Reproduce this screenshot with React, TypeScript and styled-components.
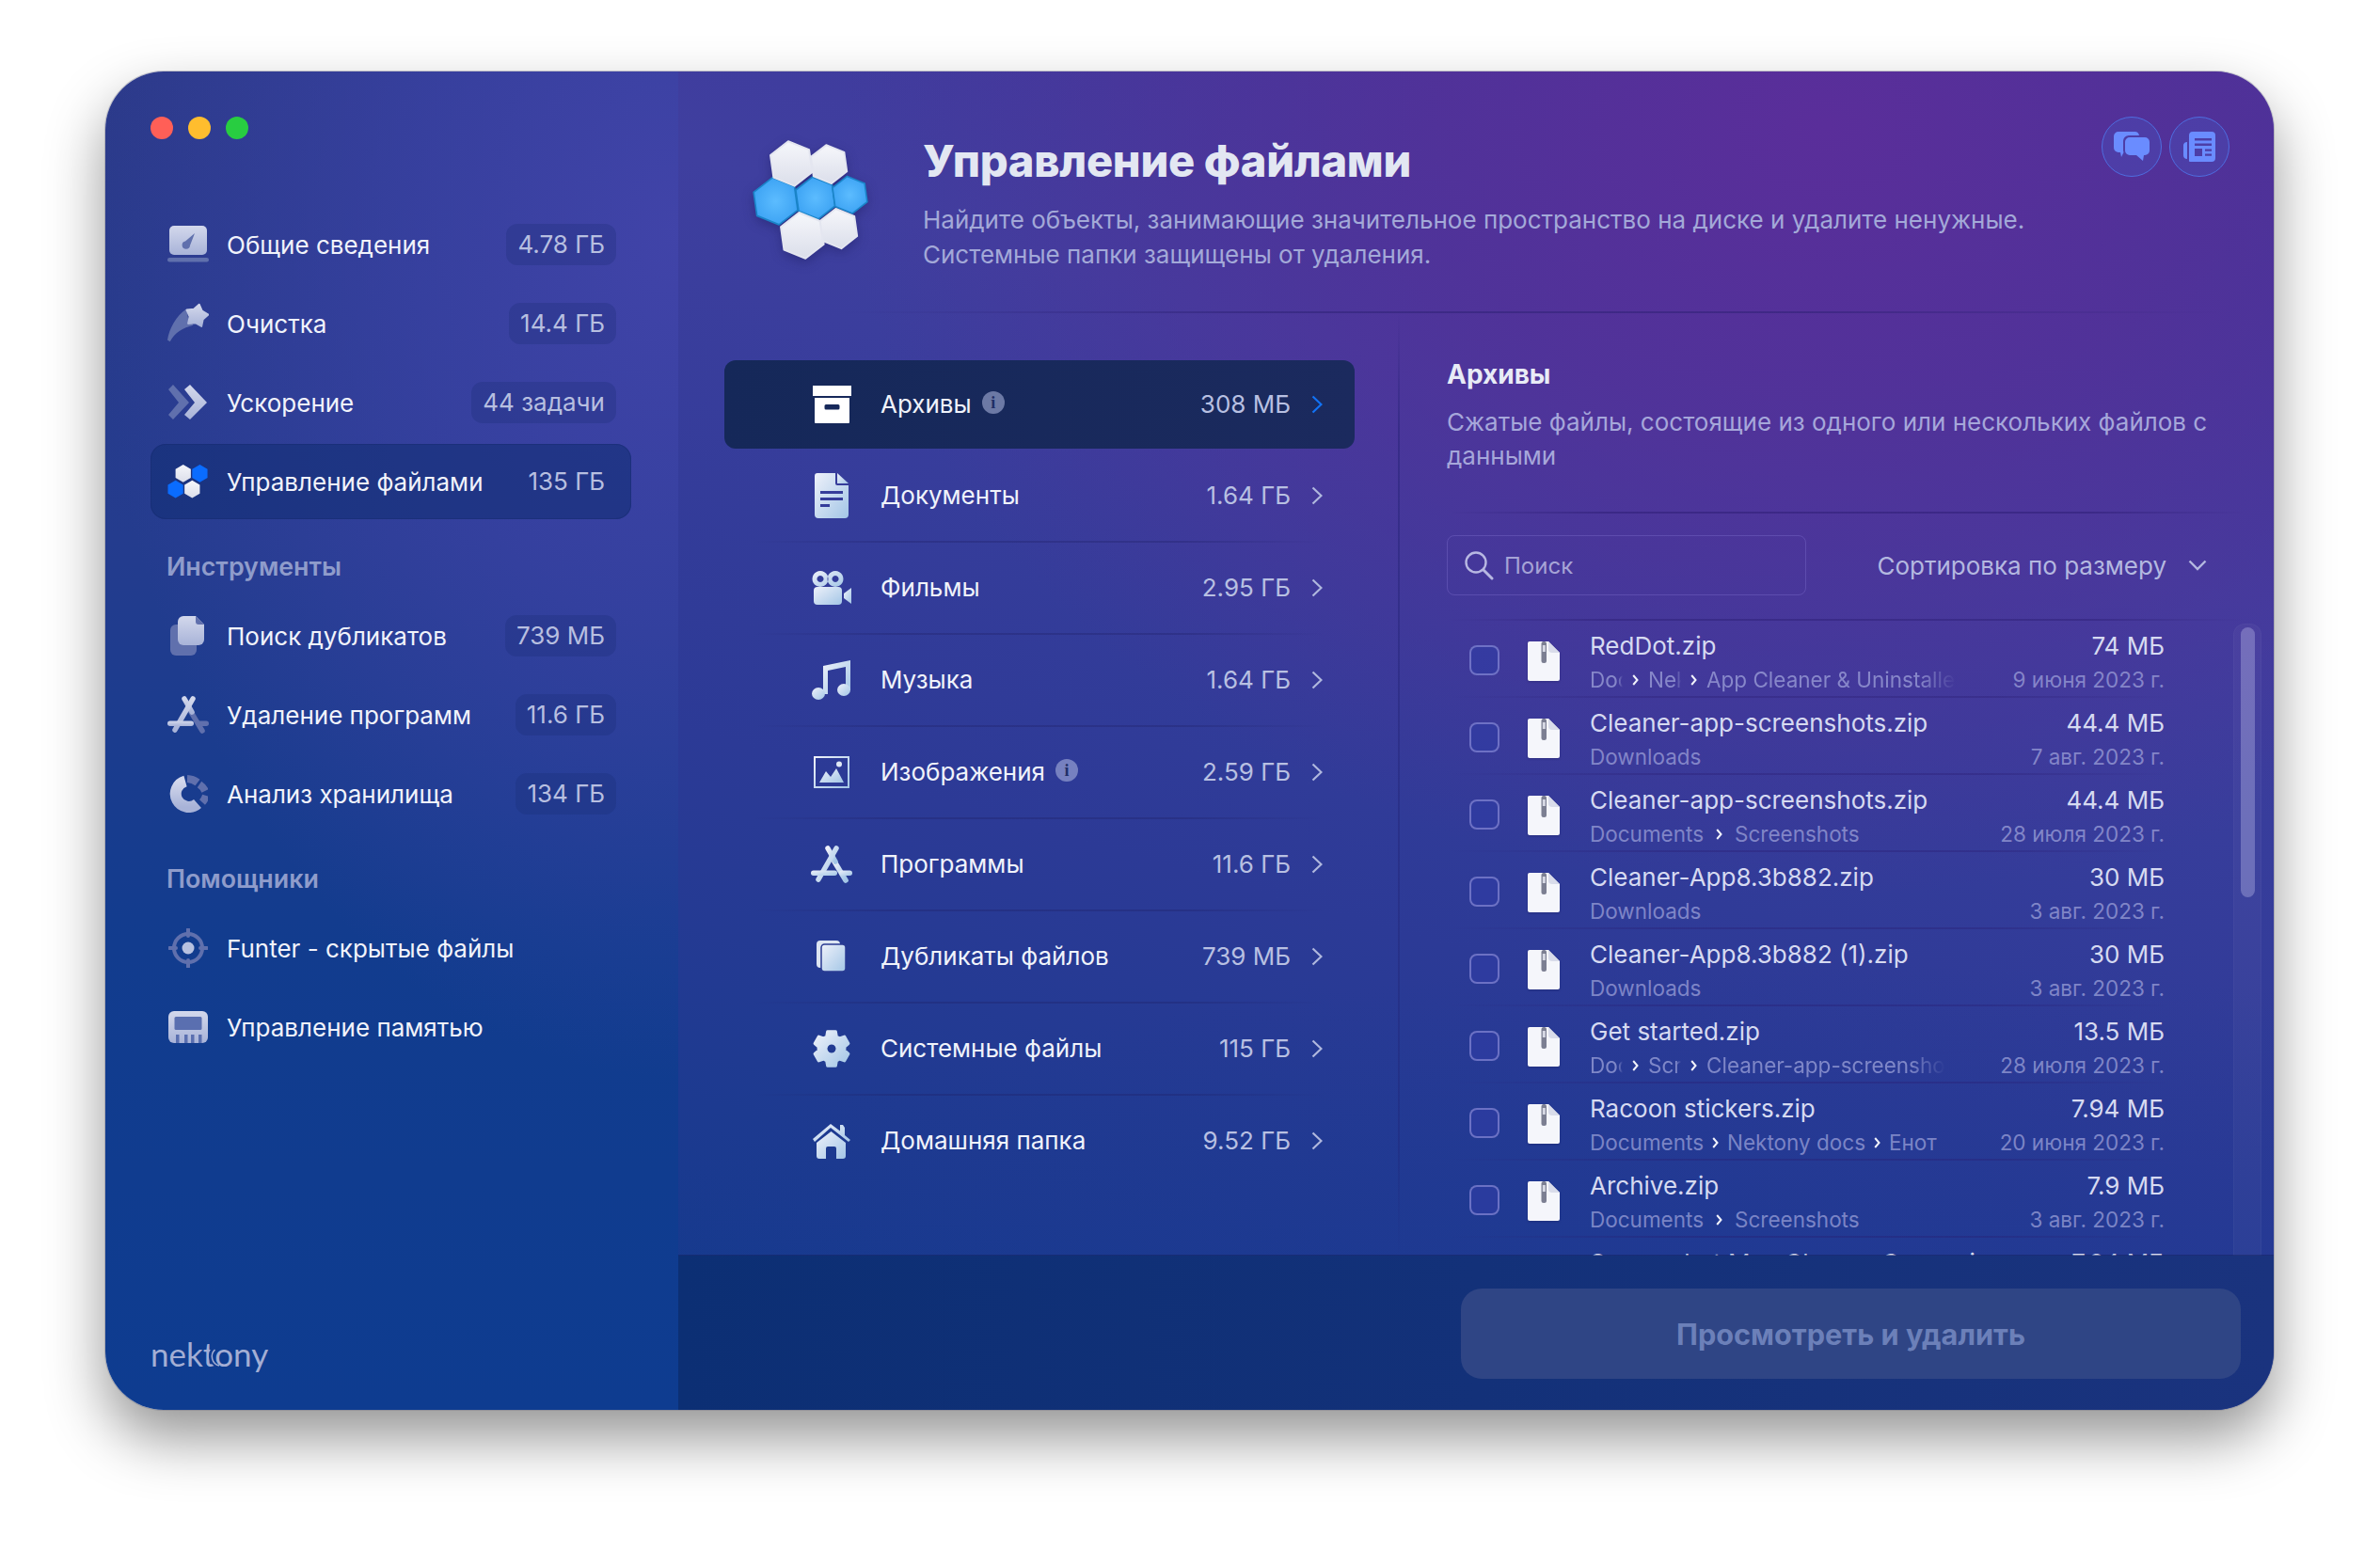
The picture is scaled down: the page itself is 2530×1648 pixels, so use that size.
import React from "react";
import styled, { createGlobalStyle } from "styled-components";

const Global = createGlobalStyle`
  html, body { margin: 0; padding: 0; background: #fff; }
  body { font-family: Inter, "Noto Sans", "Liberation Sans", sans-serif; -webkit-font-smoothing: antialiased; }
`;

const Page = styled.div`
  width: 2530px; height: 1648px; box-sizing: border-box; padding: 76px 0 0 112px; overflow: hidden; background: #fff;
`;
const Window = styled.div`
  width: 2305px; height: 1423px; display: flex; overflow: hidden; border-radius: 62px;
  box-shadow: 0 0 0 1px rgba(110,110,130,.35), 0 30px 62px rgba(0,0,0,.42);
`;
const Sidebar = styled.aside`
  width: 609px; flex: none; box-sizing: border-box; display: flex; flex-direction: column; padding: 48px 50px 38px 48px;
  background:
    radial-gradient(ellipse 620px 900px at 100% 12%, rgba(66,68,170,.95) 0%, rgba(60,66,166,.7) 45%, rgba(40,64,156,0) 100%),
    linear-gradient(to bottom, #2c3a8a 0%, #243c8e 35%, #123c8e 65%, #0e3c90 100%);
`;
const Lights = styled.div`display: flex; gap: 16px; margin-bottom: 72px;`;
const Light = styled.span<{ $c: string }>`width: 24px; height: 24px; border-radius: 50%; background: ${p => p.$c};`;
const NavRow = styled.div<{ $active?: boolean }>`
  height: 80px; margin-bottom: 4px; box-sizing: border-box; display: flex; align-items: center; padding: 0 16px 0 18px; border-radius: 16px; gap: 19px;
  background: ${p => (p.$active ? "rgba(20,46,118,.62)" : "transparent")};
  box-shadow: ${p => (p.$active ? "inset 0 0 0 1px rgba(22,42,110,.45)" : "none")};
`;
const NavIcon = styled.span`width: 44px; height: 44px; flex: none; display: flex; align-items: center; justify-content: center;`;
const NavLabel = styled.span`flex: 1; font-size: 26px; color: #f1f3fb; white-space: nowrap;`;
const Pill = styled.span<{ $plain?: boolean }>`
  height: 44px; line-height: 44px; padding: 0 12px; border-radius: 12px; font-size: 26px; color: #b7bfe0; white-space: nowrap;
  background: ${p => (p.$plain ? "transparent" : "rgba(24,42,112,.26)")};
`;
const SectionTitle = styled.div`
  margin: 30px 0 18px; padding-left: 17px; height: 32px; line-height: 32px; font-size: 26.8px; font-weight: 600; color: #8f9ccb;
`;
const LogoBox = styled.div`
  margin-top: auto; position: relative; align-self: flex-start; font-family: Lato, "Open Sans", sans-serif; font-size: 35px; line-height: 44px; color: #a3aed4;
`;
const LogoSwoosh = styled.svg`position: absolute; left: 60px; top: 10px;`;

const Main = styled.main`
  flex: 1; min-width: 0; display: flex; flex-direction: column;
  background:
    radial-gradient(ellipse 1050px 820px at 72% 4%, rgba(90,46,154,1) 0%, rgba(84,48,152,.8) 40%, rgba(70,52,150,0) 100%),
    radial-gradient(ellipse 1500px 480px at 70% 100%, rgba(28,56,146,.6) 0%, rgba(28,56,146,0) 100%),
    linear-gradient(196deg, #40349a 0%, #3f3f9f 30%, #2c3a96 62%, #103a8b 100%);
`;
const Header = styled.header`
  height: 255px; flex: none; box-sizing: border-box; display: flex; padding: 48px 47px 0 72px;
`;
const HexLogo = styled.svg`margin-top: 19px; flex: none; overflow: visible; filter: drop-shadow(0 4px 6px rgba(20,20,80,.35));`;
const HeadText = styled.div`margin: 19px 0 0 55px;`;
const Title = styled.h1`margin: 0; font-size: 47px; line-height: 56px; font-weight: 800; color: #e3e7f2; letter-spacing: -.3px;`;
const Subtitle = styled.p`margin: 16px 0 0; font-size: 26px; line-height: 37px; color: #a3a9d8; white-space: nowrap;`;
const RoundGroup = styled.div`margin-left: auto; display: flex; gap: 8px; align-self: flex-start;`;
const RoundBtn = styled.span`
  width: 64px; height: 64px; box-sizing: border-box; border-radius: 50%; display: flex; align-items: center; justify-content: center;
  background: rgba(72,84,190,.38); border: 1.5px solid #4f6ee0;
`;
const HRule = styled.div`
  height: 2px; flex: none; margin: 0 50px 0 170px;
  background: linear-gradient(to right, rgba(40,30,110,0), rgba(40,30,110,.45) 30%, rgba(40,30,110,.45) 70%, rgba(40,30,110,0));
`;
const Body = styled.div`flex: 1; min-height: 0; display: flex;`;
const Categories = styled.section`
  width: 767px; flex: none; box-sizing: border-box; padding: 50px 48px 0 49px;
  background: linear-gradient(to bottom, rgba(30,30,110,0), rgba(30,30,110,.4) 12%, rgba(30,30,110,.3) 88%, rgba(30,30,110,0)) right top / 2px 100% no-repeat;
`;
const CatRow = styled.div<{ $active?: boolean }>`
  height: ${p => (p.$active ? 94 : 96)}px; margin-bottom: ${p => (p.$active ? 2 : 0)}px; display: flex; align-items: center; padding: 0 34px 0 92px; border-radius: 12px;
  background: ${p => (p.$active ? "linear-gradient(to right,#152859,#1b2a5e)" : "transparent")};
`;
const CatSep = styled.div`
  height: 2px; margin: 0 30px;
  background: linear-gradient(to right, rgba(30,30,100,0), rgba(30,30,100,.32) 25%, rgba(30,30,100,.32) 75%, rgba(30,30,100,0));
`;
const CatIcon = styled.span`width: 44px; height: 50px; flex: none; display: flex; align-items: center; justify-content: center; margin-right: 30px;`;
const CatName = styled.span`margin-bottom: 1.5px; font-size: 26px; color: #f0f3fb; white-space: nowrap;`;
const Info = styled.span`
  width: 24px; height: 24px; margin-left: 11px; margin-top: -4px; border-radius: 50%; background: rgba(178,188,226,.55); color: #1f2e66;
  font: 700 18px/24px "Liberation Serif", serif; text-align: center;
`;
const CatValue = styled.span`margin: 0 0 1.5px auto; font-size: 26px; color: #b8c0e2; white-space: nowrap;`;
const Chevron = styled.svg`margin-left: 22px; flex: none;`;

const Details = styled.section`flex: 1; min-width: 0; display: flex; flex-direction: column; padding: 49px 0 0 50px;`;
const DetailTitle = styled.h2`margin: 0; font-size: 28px; line-height: 32px; font-weight: 700; color: #e8ebf6;`;
const DetailText = styled.p`margin: 17px 40px 0 0; font-size: 26px; line-height: 36px; color: #a6a7da;`;
const DetailRule = styled.div`
  height: 2px; flex: none; margin: 41px 30px 0 0;
  background: linear-gradient(to right, rgba(40,25,110,0), rgba(40,25,110,.45) 20%, rgba(40,25,110,.45) 80%, rgba(40,25,110,0));
`;
const Toolbar = styled.div`display: flex; align-items: center; margin: 23px 71px 0 0; height: 64px; flex: none;`;
const SearchBox = styled.div`
  width: 382px; height: 64px; box-sizing: border-box; display: flex; align-items: center; gap: 11px; padding-left: 17px; border-radius: 8px;
  border: 1.5px solid rgba(120,105,200,.45); color: #a6a3d6; font-size: 24px;
`;
const SortLabel = styled.span`margin-left: auto; font-size: 26px; color: #b4b8e0; white-space: nowrap;`;
const SortChevron = styled.svg`margin-left: 23px; flex: none;`;
const ListRule = styled.div`
  height: 2px; flex: none; margin: 25px 30px 0 0;
  background: linear-gradient(to right, rgba(40,25,110,0), rgba(40,25,110,.4) 20%, rgba(40,25,110,.4) 80%, rgba(40,25,110,0));
`;
const ListArea = styled.div`flex: 1; min-height: 0; display: flex; overflow: hidden; padding-right: 13px;`;
const Rows = styled.div`flex: 1; min-width: 0;`;
const FileRow = styled.div`
  height: 82px; box-sizing: border-box; display: flex; padding: 11px 73px 0 24px;
  background: linear-gradient(to right, rgba(40,25,110,0), rgba(40,25,110,.32) 30%, rgba(40,25,110,.32) 75%, rgba(40,25,110,0)) left bottom / 92% 2px no-repeat;
`;
const Check = styled.span`
  width: 32px; height: 32px; margin-top: 15px; flex: none; box-sizing: border-box; border-radius: 8px; border: 2px solid rgba(150,150,220,.6); background: rgba(48,60,165,.65); margin-right: 30px;
`;
const FileGlyph = styled.svg`flex: none; margin: 11px 32px 0 0; filter: drop-shadow(0 1px 1px rgba(20,20,70,.3));`;
const FileInfo = styled.div`flex: 1; min-width: 0;`;
const Line = styled.div`display: flex; justify-content: space-between; align-items: center; white-space: nowrap;`;
const FileName = styled.span`font-size: 26px; line-height: 32px; color: #d6daf1;`;
const FileSize = styled.span`font-size: 26px; line-height: 32px; color: #d6daf1;`;
const PathRow = styled.span<{ $gap: number }>`display: flex; align-items: center; gap: ${p => p.$gap}px; margin-top: 5px; font-size: 22.5px; line-height: 30px; color: rgba(168,172,224,.68);`;
const Seg = styled.span<{ $w?: number }>`
  ${p => (p.$w ? `display:inline-block; width:${p.$w}px; overflow:hidden; -webkit-mask-image:linear-gradient(to right,#000 85%,transparent); mask-image:linear-gradient(to right,#000 85%,transparent);` : "")}
`;
const FileDate = styled.span`margin-top: 4px; font-size: 22.5px; line-height: 30px; color: rgba(168,172,224,.68);`;
const Track = styled.div`
  width: 30px; flex: none; margin-top: 3px; box-sizing: border-box; padding: 4px 7.5px; border-radius: 12px 12px 0 0; background: rgba(255,255,255,.035); box-shadow: inset 0 0 0 1px rgba(255,255,255,.03);
`;
const Thumb = styled.div`width: 15px; height: 287px; border-radius: 8px; background: rgba(190,190,235,.36);`;
const Footer = styled.footer`
  height: 164px; flex: none; box-sizing: border-box; display: flex; justify-content: flex-end; padding: 35px 35px 0 0;
  background: linear-gradient(to right, #0c2f74, #1a337e);
  box-shadow: 0 -1px 0 rgba(20,30,90,.5);
`;
const ActionBtn = styled.div`
  width: 829px; height: 96px; border-radius: 22px; background: #2f4585; color: #6c80b9; font-size: 30.7px; font-weight: 700; display: flex; align-items: center; justify-content: center;
`;

/* ---- drawings ---- */
const hex = (cx: number, cy: number, r: number, rot = 0) =>
  Array.from({ length: 6 }, (_, i) => {
    const a = ((60 * i - 90 + rot) * Math.PI) / 180;
    return `${(cx + r * Math.cos(a)).toFixed(1)},${(cy + r * Math.sin(a)).toFixed(1)}`;
  }).join(" ");

const star = (cx: number, cy: number, R: number, rot = 0) =>
  Array.from({ length: 10 }, (_, i) => {
    const a = ((36 * i - 90 + rot) * Math.PI) / 180;
    const r = i % 2 ? R * 0.62 : R;
    return `${(cx + r * Math.cos(a)).toFixed(1)},${(cy + r * Math.sin(a)).toFixed(1)}`;
  }).join(" ");

const gearPath = (() => {
  const pts: string[] = [];
  const c = 22;
  for (let i = 0; i < 6; i++) {
    const base = 60 * i - 90;
    const add = (deg: number, r: number) => {
      const a = ((base + deg) * Math.PI) / 180;
      pts.push(`${(c + r * Math.cos(a)).toFixed(1)} ${(c + r * Math.sin(a)).toFixed(1)}`);
    };
    add(-13, 19.5); add(13, 19.5); add(22, 14.5); add(38, 14.5);
  }
  return `M${pts.join("L")}Z M22 15.5a6.5 6.5 0 1 0 .01 0Z`;
})();

const Defs = () => (
  <svg width="0" height="0" style={{ position: "absolute" }}>
    <defs>
      <linearGradient id="lt" x1="0" y1="0" x2="1" y2="1">
        <stop offset="0" stopColor="#eef1fa" />
        <stop offset="1" stopColor="#a3c6e6" />
      </linearGradient>
      <linearGradient id="sb" x1="0" y1="0" x2="0" y2="1">
        <stop offset="0" stopColor="#d3d8ec" />
        <stop offset="1" stopColor="#a8b3d8" />
      </linearGradient>
      <linearGradient id="wh" x1="0" y1="0" x2="0" y2="1">
        <stop offset="0" stopColor="#f6f7fb" />
        <stop offset="1" stopColor="#dbdeea" />
      </linearGradient>
      <radialGradient id="bl">
        <stop offset="0" stopColor="#5cbcff" />
        <stop offset="1" stopColor="#3ea4f4" />
      </radialGradient>
    </defs>
  </svg>
);

const DIM = "#6070ad";
const IcOverview = () => (
  <svg width="44" height="40" viewBox="0 0 44 40">
    <rect x="2" y="0" width="40" height="31" rx="5" fill="url(#sb)" />
    <rect x="0" y="34" width="44" height="4.5" rx="2.2" fill={DIM} />
    <path d="M29 8 L24 21 a4.2 4.2 0 1 1-5-4.5Z" fill={DIM} />
  </svg>
);
const IcClean = () => (
  <svg width="48" height="44" viewBox="0 0 48 44">
    <path d="M0 41 C2 28 10 13 22 5 L24 16 L30 24 C18 27 8 33 3 43Z" fill={DIM} />
    <polygon points={star(34, 13, 13.5, 12)} fill="url(#sb)" stroke="url(#sb)" strokeWidth="2" strokeLinejoin="round" />
  </svg>
);
const IcSpeed = () => (
  <svg width="42" height="38" viewBox="0 0 42 38">
    <path d="M0 5 L5 0 L22 19 L5 37 L0 32 L11 19Z" fill={DIM} />
    <path d="M17 5 L23 0 L41 19 L23 37 L17 32 L28 19Z" fill="url(#sb)" />
  </svg>
);
const IcFiles = () => (
  <svg width="46" height="38" viewBox="0 0 46 38">
    <polygon points={hex(17.5, 10, 9.8)} fill="url(#wh)" />
    <polygon points={hex(36, 10, 9.8)} fill="#0a6cff" />
    <polygon points={hex(9, 27.5, 9.8)} fill="#0a6cff" />
    <polygon points={hex(27.5, 27.5, 9.8)} fill="url(#wh)" />
  </svg>
);
const IcDup = () => (
  <svg width="38" height="42" viewBox="0 0 38 42">
    <rect x="0" y="9" width="28" height="33" rx="6" fill={DIM} />
    <path d="M14 0 H27 L36 9 V25 a6 6 0 0 1-6 6 H14 a6 6 0 0 1-6-6 V6 a6 6 0 0 1 6-6Z" fill="url(#sb)" />
    <path d="M27 0 L36 9 H30 a3 3 0 0 1-3-3Z" fill={DIM} />
  </svg>
);
const IcStore = ({ dim, fill }: { dim?: string; fill: string }) => (
  <svg width="44" height="40" viewBox="0 0 44 40" fill="none" strokeLinecap="round">
    <path d="M25 17 L37 37" stroke={dim ?? fill} strokeWidth="5.5" />
    <path d="M18 3 L26 17" stroke={fill} strokeWidth="5.5" />
    <path d="M27 3 L8 36" stroke={fill} strokeWidth="5.5" />
    <rect x="0" y="26.500" width="28" height="5.500" rx="2.750" fill={fill} />
    <rect x="30" y="26.500" width="14" height="5.500" rx="2.750" fill={dim ?? fill} />
  </svg>
);
const IcPie = () => (
  <svg width="42" height="40" viewBox="0 0 42 40" fill="none">
    <path d="M18 6.5 A14 14 0 1 0 31 30.5" stroke="url(#sb)" strokeWidth="12" />
    <path d="M20 1 A19 19 0 0 1 31 5" stroke={DIM} strokeWidth="8" transform="translate(0 3)" />
    <path d="M33 10 A17 17 0 0 1 39 17" stroke={DIM} strokeWidth="8" />
    <path d="M40 22 A18 18 0 0 1 36 29" stroke={DIM} strokeWidth="8" />
  </svg>
);
const IcTarget = () => (
  <svg width="42" height="42" viewBox="0 0 42 42" fill="none">
    <circle cx="21" cy="21" r="15" stroke={DIM} strokeWidth="4" />
    <path d="M21 1v7M21 34v7M1 21h7M34 21h7" stroke={DIM} strokeWidth="4" strokeLinecap="round" />
    <circle cx="21" cy="21" r="6.5" fill="#b7c1e0" />
  </svg>
);
const IcMemory = () => (
  <svg width="42" height="34" viewBox="0 0 42 34">
    <path d="M6 0 H36 a6 6 0 0 1 6 6 V28 a6 6 0 0 1-6 6 H6 a6 6 0 0 1-6-6 V6 a6 6 0 0 1 6-6Z" fill="url(#sb)" />
    <rect x="6.5" y="6" width="29" height="14" rx="1.5" fill="#5a6fb0" />
    <path d="M8 25h3.5v9H8zM17 25h3.5v9H17zM24 25h3.5v9H24zM32 25h3.5v9H32z" fill="#5a6fb0" />
  </svg>
);
const CArchive = () => (
  <svg width="41" height="40" viewBox="0 0 41 40">
    <rect x="0" y="0" width="41" height="11" fill="#fff" />
    <path d="M2 13 H39 V39 a1 1 0 0 1-1 1 H3 a1 1 0 0 1-1-1Z M14 20 a1.5 1.5 0 0 0-1.5 1.5 V24 a1.5 1.5 0 0 0 1.5 1.5 H27 a1.5 1.5 0 0 0 1.5-1.5 V21.5 A1.5 1.5 0 0 0 27 20Z" fill="#fff" fillRule="evenodd" />
  </svg>
);
const CDoc = () => (
  <svg width="36" height="48" viewBox="0 0 36 48">
    <path fillRule="evenodd" fill="url(#lt)" d="M3 0 H22 V11 a2 2 0 0 0 2 2 H36 V44 a4 4 0 0 1-4 4 H4 a4 4 0 0 1-4-4 V3 a3 3 0 0 1 3-3Z M6 19 v3 H30 v-3Z M6 26 v3 H30 v-3Z M6 33 v3 H16 v-3Z" />
    <path d="M24 0 L36 11 H24Z" fill="url(#lt)" />
  </svg>
);
const CMovie = () => (
  <svg width="42" height="36" viewBox="0 0 42 36" fill="url(#lt)">
    <path fillRule="evenodd" d="M9 0a8.5 8.5 0 1 1-.01 0Z M9 5a3.5 3.5 0 1 0 .01 0Z M25 0a8.5 8.5 0 1 1-.01 0Z M25 5a3.5 3.5 0 1 0 .01 0Z" />
    <rect x="2" y="17" width="30" height="19" rx="4" />
    <path d="M34 24 L42 18 V35 L34 29Z" />
  </svg>
);
const CMusic = () => (
  <svg width="42" height="42" viewBox="0 0 42 42" fill="url(#lt)">
    <path d="M12 6 L41 0 V32 h-5 V7 L17 11 V36 h-5Z" />
    <ellipse cx="7" cy="35.5" rx="7" ry="6.5" />
    <ellipse cx="34" cy="31.5" rx="7" ry="6.5" />
  </svg>
);
const CImage = () => (
  <svg width="38" height="34" viewBox="0 0 38 34">
    <rect x="1" y="1" width="36" height="32" fill="none" stroke="url(#lt)" strokeWidth="2" />
    <path d="M6 28 L13 16 L18 22 L24 13 L32 28Z" fill="url(#lt)" />
    <circle cx="27" cy="8.5" r="3" fill="#dfe8f5" />
  </svg>
);
const CDup = () => (
  <svg width="32" height="34" viewBox="0 0 32 34">
    <rect x="0" y="0" width="25" height="29" rx="4" fill="#dce5f2" />
    <rect x="5" y="4" width="26" height="29" rx="3.5" fill="url(#lt)" stroke="#2a3b92" strokeWidth="1.5" />
  </svg>
);
const CGear = () => (
  <svg width="42" height="44" viewBox="0 0 44 44">
    <path d={gearPath} fill="url(#lt)" fillRule="evenodd" stroke="url(#lt)" strokeWidth="3.5" strokeLinejoin="round" />
  </svg>
);
const CHome = () => (
  <svg width="42" height="38" viewBox="0 0 42 38" fill="url(#lt)">
    <path d="M1 17 L20 1 L30 8.5 V2 h3 l2 3 V13 L41 18 L39 20 L20 5 L3 20Z" />
    <path fillRule="evenodd" d="M20.5 9 L36 21 V35 a3 3 0 0 1-3 3 H26 V27 a2 2 0 0 0-2-2 H17 a2 2 0 0 0-2 2 V38 H8 a3 3 0 0 1-3-3 V21Z" />
  </svg>
);
const ChevronRight = ({ color }: { color: string }) => (
  <Chevron width="12" height="20" viewBox="0 0 12 20" fill="none">
    <path d="M1.5 1.5 L10.5 10 L1.5 18.5" stroke={color} strokeWidth="2.2" />
  </Chevron>
);
const ZipFile = () => (
  <FileGlyph width="34" height="42" viewBox="0 0 34 42">
    <path d="M2 0 H22 L34 12 V40 a2 2 0 0 1-2 2 H2 a2 2 0 0 1-2-2 V2 a2 2 0 0 1 2-2Z" fill="#f5f6fb" />
    <path d="M22 0 L34 12 H26 a4 4 0 0 1-4-4Z" fill="#d9dcea" />
    <rect x="14.500" y="0" width="5.500" height="23" rx="2.500" fill="#7c7f92" />
    <rect x="15.800" y="4" width="3" height="7" fill="#d7d9e4" />
  </FileGlyph>
);

const sidebarA = [
  { n: "Общие сведения", v: "4.78 ГБ", i: <IcOverview /> },
  { n: "Очистка", v: "14.4 ГБ", i: <IcClean /> },
  { n: "Ускорение", v: "44 задачи", i: <IcSpeed /> },
  { n: "Управление файлами", v: "135 ГБ", i: <IcFiles />, active: true },
];
const sidebarB = [
  { n: "Поиск дубликатов", v: "739 МБ", i: <IcDup /> },
  { n: "Удаление программ", v: "11.6 ГБ", i: <IcStore fill="url(#sb)" dim={DIM} /> },
  { n: "Анализ хранилища", v: "134 ГБ", i: <IcPie /> },
];
const sidebarC = [
  { n: "Funter - скрытые файлы", i: <IcTarget /> },
  { n: "Управление памятью", i: <IcMemory /> },
];
const cats = [
  { n: "Архивы", v: "308 МБ", i: <CArchive />, info: true, active: true },
  { n: "Документы", v: "1.64 ГБ", i: <CDoc /> },
  { n: "Фильмы", v: "2.95 ГБ", i: <CMovie /> },
  { n: "Музыка", v: "1.64 ГБ", i: <CMusic /> },
  { n: "Изображения", v: "2.59 ГБ", i: <CImage />, info: true },
  { n: "Программы", v: "11.6 ГБ", i: <IcStore fill="url(#lt)" /> },
  { n: "Дубликаты файлов", v: "739 МБ", i: <CDup /> },
  { n: "Системные файлы", v: "115 ГБ", i: <CGear /> },
  { n: "Домашняя папка", v: "9.52 ГБ", i: <CHome /> },
];
type S = { t: string; w?: number };
const files: { n: string; s: string; d: string; g: number; p: S[] }[] = [
  { n: "RedDot.zip", s: "74 МБ", d: "9 июня 2023 г.", g: 10, p: [{ t: "Documents", w: 35 }, { t: "Nektony", w: 35 }, { t: "App Cleaner & Uninstaller", w: 266 }] },
  { n: "Cleaner-app-screenshots.zip", s: "44.4 МБ", d: "7 авг. 2023 г.", g: 10, p: [{ t: "Downloads" }] },
  { n: "Cleaner-app-screenshots.zip", s: "44.4 МБ", d: "28 июля 2023 г.", g: 13, p: [{ t: "Documents" }, { t: "Screenshots" }] },
  { n: "Cleaner-App8.3b882.zip", s: "30 МБ", d: "3 авг. 2023 г.", g: 10, p: [{ t: "Downloads" }] },
  { n: "Cleaner-App8.3b882 (1).zip", s: "30 МБ", d: "3 авг. 2023 г.", g: 10, p: [{ t: "Downloads" }] },
  { n: "Get started.zip", s: "13.5 МБ", d: "28 июля 2023 г.", g: 10, p: [{ t: "Documents", w: 35 }, { t: "Screenshots", w: 35 }, { t: "Cleaner-app-screenshots", w: 254 }] },
  { n: "Racoon stickers.zip", s: "7.94 МБ", d: "20 июня 2023 г.", g: 9, p: [{ t: "Documents" }, { t: "Nektony docs" }, { t: "Енот" }] },
  { n: "Archive.zip", s: "7.9 МБ", d: "3 авг. 2023 г.", g: 13, p: [{ t: "Documents" }, { t: "Screenshots" }] },
  { n: "Screenshot Mac Cleaner Cover.zip", s: "7.84 МБ", d: "3 авг. 2023 г.", g: 13, p: [{ t: "Documents" }, { t: "Screenshots" }] },
];
const PathChevron = () => (
  <svg width="7" height="12" viewBox="0 0 7 12" fill="none">
    <path d="M1.2 1 L5.5 6 L1.2 11" stroke="#f2f3fb" strokeWidth="2" />
  </svg>
);
const NavItem = ({ n, v, i, active }: { n: string; v?: string; i: React.ReactNode; active?: boolean }) => (
  <NavRow $active={active}>
    <NavIcon>{i}</NavIcon>
    <NavLabel>{n}</NavLabel>
    {v && <Pill $plain={active}>{v}</Pill>}
  </NavRow>
);

export default function App() {
  return (
    <Page>
      <Global />
      <Defs />
      <Window>
        <Sidebar>
          <Lights>
            <Light $c="#ff5f57" />
            <Light $c="#ffbd2e" />
            <Light $c="#28cd41" />
          </Lights>
          {sidebarA.map(x => <NavItem key={x.n} {...x} />)}
          <SectionTitle>Инструменты</SectionTitle>
          {sidebarB.map(x => <NavItem key={x.n} {...x} />)}
          <SectionTitle>Помощники</SectionTitle>
          {sidebarC.map(x => <NavItem key={x.n} {...x} />)}
          <LogoBox>
            nektony
            <LogoSwoosh width="26" height="30" viewBox="0 0 26 30" fill="none">
              <path d="M8 7 A10 10 0 0 0 10 24" stroke="#103c90" strokeWidth="4.500" />
              <path d="M8.500 8 A10 10 0 0 0 13 25" stroke="#a3aed4" strokeWidth="1.500" />
            </LogoSwoosh>
          </LogoBox>
        </Sidebar>
        <Main>
          <Header>
            <HexLogo width="133" height="137" viewBox="100 130 400 410">
              <g fill="url(#bl)" stroke="#1a84c8" strokeWidth="5" strokeLinejoin="round">
                <polygon points={hex(195, 342, 76, -8)} />
                <polygon points={hex(322, 332, 68, -8)} />
                <polygon points={hex(432, 322, 60, -8)} />
              </g>
              <g fill="url(#wh)" stroke="#e4e6f0" strokeWidth="6" strokeLinejoin="round">
                <polygon points={hex(245, 222, 72, -8)} />
                <polygon points={hex(365, 224, 62, -8)} />
                <polygon points={hex(280, 452, 74, -8)} />
                <polygon points={hex(396, 430, 64, -8)} />
              </g>
            </HexLogo>
            <HeadText>
              <Title>Управление файлами</Title>
              <Subtitle>
                Найдите объекты, занимающие значительное пространство на диске и удалите ненужные.
                <br />
                Системные папки защищены от удаления.
              </Subtitle>
            </HeadText>
            <RoundGroup>
              <RoundBtn>
                <svg width="38" height="32" viewBox="0 0 38 32" fill="#6a8cff">
                  <path d="M5 0 H22 a5 5 0 0 1 5 4 H16 a6 6 0 0 0-6 6 V20 a6 6 0 0 0 .5 2 L8 27 L7 22 H5 a5 5 0 0 1-5-5 V5 a5 5 0 0 1 5-5Z" />
                  <path d="M17 6 H33 a5 5 0 0 1 5 5 V20 a5 5 0 0 1-5 5 H32 L31 31 L24 25 H17 a5 5 0 0 1-5-5 V11 a5 5 0 0 1 5-5Z" />
                </svg>
              </RoundBtn>
              <RoundBtn>
                <svg width="34" height="32" viewBox="0 0 34 32" fill="#6a8cff">
                  <path d="M4 11 V29 a3 3 0 0 0 0 .1 C1.5 29 0 27.500 0 25 V14 a4 4 0 0 1 4-3Z" />
                  <path fillRule="evenodd" d="M10 0 H30 a4 4 0 0 1 4 4 V28 a4 4 0 0 1-4 4 H8 a4 4 0 0 1-2-.6 V4 a4 4 0 0 1 4-4Z M12 7 v2.500 H30 V7Z M12 12.500 v2.500 H30 V12.500Z M12 18 v8 H20 v-8Z M23 18.500 v2.300 H30 V18.500Z M23 23.500 v2.300 H30 V23.500Z" />
                </svg>
              </RoundBtn>
            </RoundGroup>
          </Header>
          <HRule />
          <Body>
            <Categories>
              {cats.map((c, i) => (
                <React.Fragment key={c.n}>
                  <CatRow $active={c.active}>
                    <CatIcon>{c.i}</CatIcon>
                    <CatName>{c.n}</CatName>
                    {c.info && <Info>i</Info>}
                    <CatValue>{c.v}</CatValue>
                    <ChevronRight color={c.active ? "#1273f5" : "#b0b8de"} />
                  </CatRow>
                  {i > 0 && i < cats.length - 1 && <CatSep />}
                </React.Fragment>
              ))}
            </Categories>
            <Details>
              <DetailTitle>Архивы</DetailTitle>
              <DetailText>Сжатые файлы, состоящие из одного или нескольких файлов с данными</DetailText>
              <DetailRule />
              <Toolbar>
                <SearchBox>
                  <svg width="32" height="32" viewBox="0 0 32 32" fill="none">
                    <circle cx="13" cy="13" r="10.500" stroke="#b8b8e2" strokeWidth="2.4" />
                    <path d="M21 21 L30 30" stroke="#b8b8e2" strokeWidth="3" strokeLinecap="round" />
                  </svg>
                  Поиск
                </SearchBox>
                <SortLabel>Сортировка по размеру</SortLabel>
                <SortChevron width="20" height="12" viewBox="0 0 20 12" fill="none">
                  <path d="M1.500 1.500 L10 10 L18.500 1.500" stroke="#b4b8e0" strokeWidth="2.400" />
                </SortChevron>
              </Toolbar>
              <ListRule />
              <ListArea>
                <Rows>
                  {files.map((f, i) => (
                    <FileRow key={i}>
                      <Check />
                      <ZipFile />
                      <FileInfo>
                        <Line>
                          <FileName>{f.n}</FileName>
                          <FileSize>{f.s}</FileSize>
                        </Line>
                        <Line>
                          <PathRow $gap={f.g}>
                            {f.p.map((s, j) => (
                              <React.Fragment key={j}>
                                {j > 0 && <PathChevron />}
                                <Seg $w={s.w}>{s.t}</Seg>
                              </React.Fragment>
                            ))}
                          </PathRow>
                          <FileDate>{f.d}</FileDate>
                        </Line>
                      </FileInfo>
                    </FileRow>
                  ))}
                </Rows>
                <Track>
                  <Thumb />
                </Track>
              </ListArea>
            </Details>
          </Body>
          <Footer>
            <ActionBtn>Просмотреть и удалить</ActionBtn>
          </Footer>
        </Main>
      </Window>
    </Page>
  );
}
